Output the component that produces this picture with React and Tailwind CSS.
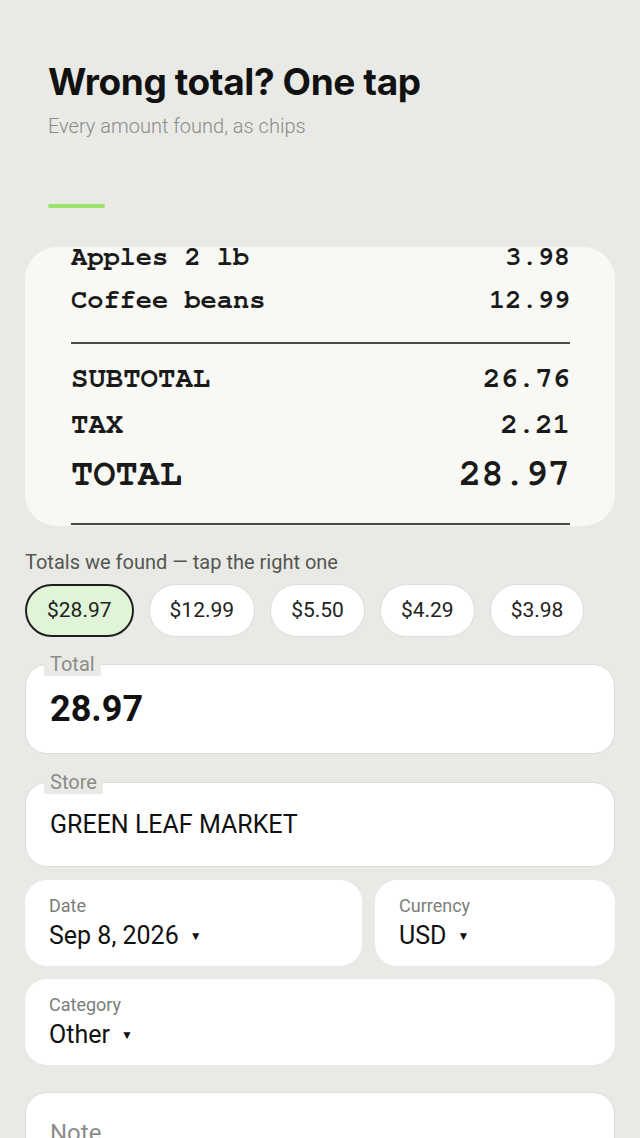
const chips = ["$28.97", "$12.99", "$5.50", "$4.29", "$3.98"];

const Caret = () => (
  <span className="ml-[11px] text-[12px] leading-none text-[#111]">▼</span>
);

const ReceiptRow = ({ left, right, className }) => (
  <div className={`flex items-center justify-between ${className}`}>
    <span>{left}</span>
    <span>{right}</span>
  </div>
);

const LegendField = ({ label, children, className }) => (
  <div
    className={`relative rounded-[22px] border border-[#dcddd8] bg-white px-[24px] flex items-center ${className}`}
  >
    <span className="absolute left-[18px] top-[-13px] bg-[#e9eae6] px-[6px] text-[20px] leading-[24px] text-[#8b8c88]">
      {label}
    </span>
    {children}
  </div>
);

const SelectBox = ({ label, value, className }) => (
  <div className={`rounded-[22px] bg-white px-[24px] pt-[16px] h-[86px] ${className}`}>
    <div className="text-[18px] leading-[20px] text-[#7d7e7a]">{label}</div>
    <div className="mt-[5px] flex items-center text-[25px] leading-[30px] text-[#111]">
      {value}
      <Caret />
    </div>
  </div>
);

export default function App() {
  return (
    <div
      className="min-h-[1138px] bg-[#e9eae6] overflow-hidden"
      style={{ fontFamily: "Roboto, 'Noto Sans', sans-serif" }}
    >
      {/* Header */}
      <div className="px-[48px] pt-[60px]">
        <h1 className="font-['Inter',sans-serif] text-[37px] leading-[44px] font-bold tracking-[-0.4px] text-[#111]">
          Wrong total? One tap
        </h1>
        <p className="mt-[8px] text-[20px] leading-[28px] font-light text-[#8b8c88]">
          Every amount found, as chips
        </p>
        <div className="mt-[64px] h-[4px] w-[57px] rounded-full bg-[#9be36a]" />
      </div>

      {/* Receipt */}
      <div className="mx-[25px] mt-[39px] h-[279px] overflow-hidden rounded-[32px] bg-[#f8f8f4] pl-[46px] pr-[45px]">
        <div className="mt-[-11px] font-['Nimbus_Mono_PS','Nimbus_Mono_L','FreeMono','Courier_New',Courier,monospace] font-bold text-[#1a1a1a]">
          <ReceiptRow left="Apples 2 lb" right="3.98" className="h-[43px] text-[27px]" />
          <ReceiptRow left="Coffee beans" right="12.99" className="h-[43px] text-[27px]" />
          <div className="mt-[20px] h-[2px] bg-[#4a4a48]" />
          <ReceiptRow left="SUBTOTAL" right="26.76" className="mt-[12px] h-[46px] text-[29px]" />
          <ReceiptRow left="TAX" right="2.21" className="h-[46px] text-[29px]" />
          <ReceiptRow left="TOTAL" right="28.97" className="h-[52px] text-[37px]" />
          <div className="mt-[23px] h-[2px] bg-[#4a4a48]" />
        </div>
      </div>

      {/* Chips */}
      <div className="px-[25px]">
        <p className="mt-[24px] text-[20px] leading-[24px] text-[#555652]">
          Totals we found — tap the right one
        </p>
        <div className="mt-[10px] flex gap-[15px]">
          {chips.map((c, i) => (
            <button
              key={c}
              className={
                i === 0
                  ? "h-[53px] rounded-full border-2 border-[#1f1f1f] bg-[#e0f5d8] px-[20px] text-[21px] text-[#222]"
                  : "h-[53px] rounded-full border border-[#dcddd8] bg-white px-[20px] text-[21px] text-[#222]"
              }
            >
              {c}
            </button>
          ))}
        </div>

        {/* Fields */}
        <LegendField label="Total" className="mt-[27px] h-[90px]">
          <span className="text-[36px] font-bold text-[#111]">28.97</span>
        </LegendField>

        <LegendField label="Store" className="mt-[28px] h-[85px]">
          <span className="text-[25px] text-[#111]">GREEN LEAF MARKET</span>
        </LegendField>

        <div className="mt-[13px] flex gap-[13px]">
          <SelectBox label="Date" value="Sep 8, 2026" className="flex-1" />
          <SelectBox label="Currency" value="USD" className="w-[240px]" />
        </div>

        <SelectBox label="Category" value="Other" className="mt-[13px]" />

        <div className="mt-[27px] h-[120px] rounded-[22px] border border-[#dcddd8] bg-white px-[24px] pt-[28px]">
          <span className="text-[24px] leading-[24px] text-[#8b8c88]">Note</span>
        </div>
      </div>
    </div>
  );
}
